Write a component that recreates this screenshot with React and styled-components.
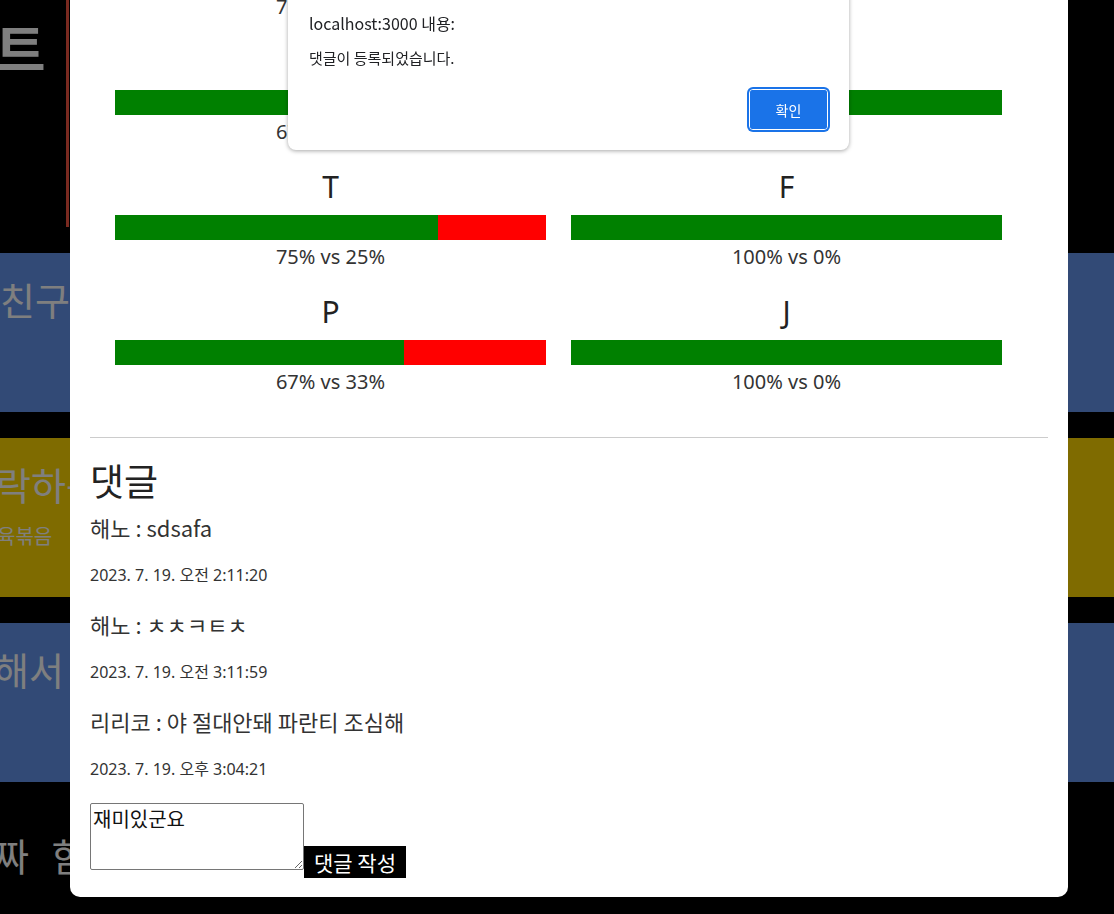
import React from 'react';
import styled, { createGlobalStyle } from 'styled-components';

const stats = [
  { left: { label: 'E', a: 75 }, right: { label: 'I', a: 100 } },
  { left: { label: 'N', a: 67 }, right: { label: 'S', a: 100 } },
  { left: { label: 'T', a: 75 }, right: { label: 'F', a: 100 } },
  { left: { label: 'P', a: 67 }, right: { label: 'J', a: 100 } },
];

const comments = [
  { name: '해노', text: 'sdsafa', date: '2023. 7. 19. 오전 2:11:20' },
  { name: '해노', text: 'ㅊㅊㅋㅌㅊ', date: '2023. 7. 19. 오전 3:11:59' },
  { name: '리리코', text: '야 절대안돼 파란티 조심해', date: '2023. 7. 19. 오후 3:04:21' },
];

const StatBlock = ({ label, a }) => (
  <StatItem>
    <Letter>{label}</Letter>
    <Bar>
      <Fill style={{ width: `${a}%` }} />
    </Bar>
    <Percent>{a}% vs {100 - a}%</Percent>
  </StatItem>
);

const App = () => {
  return (
    <>
      <GlobalStyle />
      <Page>
        <Header>
          <HeaderBlock>
            <Title>트</Title>
          </HeaderBlock>
        </Header>
        <Band $color="cornflowerblue">
          <BandTitle>친구</BandTitle>
        </Band>
        <Band $color="gold">
          <BandTitle $indent={-4}>락하는</BandTitle>
          <BandSub $indent={-3}>육볶음</BandSub>
        </Band>
        <Band $color="cornflowerblue">
          <BandTitle $indent={-6}>해서</BandTitle>
        </Band>
        <BottomText>짜 함</BottomText>
      </Page>

      <Overlay />

      <Modal>
        <StatGrid>
          {stats.map((row, i) => (
            <React.Fragment key={i}>
              <StatBlock {...row.left} />
              <StatBlock {...row.right} />
            </React.Fragment>
          ))}
        </StatGrid>
        <Divider />
        <CommentTitle>댓글</CommentTitle>
        <CommentList>
          {comments.map((c, i) => (
            <CommentItem key={i}>
              <CommentText>{c.name} : {c.text}</CommentText>
              <CommentDate>{c.date}</CommentDate>
            </CommentItem>
          ))}
        </CommentList>
        <CommentForm>
          <CommentInput defaultValue="재미있군요" />
          <SubmitButton>댓글 작성</SubmitButton>
        </CommentForm>
      </Modal>

      <AlertBox>
        <AlertTitle>localhost:3000 내용:</AlertTitle>
        <AlertMessage>댓글이 등록되었습니다.</AlertMessage>
        <AlertActions>
          <AlertButton>확인</AlertButton>
        </AlertActions>
      </AlertBox>
    </>
  );
};

const GlobalStyle = createGlobalStyle`
  html, body {
    margin: 0;
    padding: 0;
    background: #000;
    overflow: hidden;
  }
  body {
    font-family: "Noto Sans", "Noto Sans CJK KR", sans-serif;
  }
`;

const Page = styled.div`
  width: 100%;
  height: 914px;
  background: #000;
  display: flex;
  flex-direction: column;
  overflow: hidden;
  color: #fff;
  font-family: "Noto Sans CJK KR", sans-serif;
`;

const Header = styled.header`
  height: 253px;
  display: flex;
  align-items: flex-start;
  flex-shrink: 0;
`;

const HeaderBlock = styled.div`
  width: 66px;
  height: 227px;
  border-right: 3px solid #f55541;
  overflow: hidden;
`;

const Title = styled.h1`
  margin: 14px 0 0 -5px;
  font-size: 55px;
  font-weight: 700;
  line-height: 64px;
  white-space: nowrap;
`;

const Band = styled.section`
  height: 159px;
  flex-shrink: 0;
  margin-bottom: 26px;
  background: ${(p) => p.$color};
  overflow: hidden;
`;

const BandTitle = styled.div`
  margin-top: 24px;
  font-size: 38px;
  line-height: 44px;
  white-space: nowrap;
  text-indent: ${(p) => p.$indent || 0}px;
`;

const BandSub = styled.div`
  margin-top: 17px;
  font-size: 20px;
  line-height: 26px;
  white-space: nowrap;
  text-indent: ${(p) => p.$indent || 0}px;
`;

const BottomText = styled.div`
  margin-top: 25px;
  font-size: 38px;
  line-height: 44px;
  white-space: nowrap;
  text-indent: -6px;
  word-spacing: 14px;
`;

const Overlay = styled.div`
  position: fixed;
  inset: 0;
  background: rgba(0, 0, 0, 0.5);
`;

const Modal = styled.div`
  position: fixed;
  left: 70px;
  width: 998px;
  bottom: 17px;
  box-sizing: border-box;
  padding: 20px 20px 19px;
  background: #fff;
  border-radius: 10px;
  color: #222;
  font-family: "Noto Sans", "Noto Sans CJK KR", sans-serif;
`;

const StatGrid = styled.div`
  display: grid;
  grid-template-columns: 431px 431px;
  column-gap: 25px;
  row-gap: 25px;
  padding-left: 25px;
`;

const StatItem = styled.div`
  display: flex;
  flex-direction: column;
  align-items: center;
`;

const Letter = styled.div`
  font-size: 30px;
  line-height: 36px;
  margin-bottom: 10px;
  color: #222;
`;

const Bar = styled.div`
  width: 100%;
  height: 25px;
  display: flex;
  background: #ff0000;
`;

const Fill = styled.div`
  height: 100%;
  background: #008000;
`;

const Percent = styled.div`
  margin-top: 5px;
  font-size: 20px;
  line-height: 24px;
  color: #333;
`;

const Divider = styled.hr`
  margin: 43px 0 0;
  border: 0;
  border-top: 1px solid #ccc;
  height: 0;
`;

const CommentTitle = styled.h2`
  margin: 21px 0 0;
  font-family: "Noto Sans CJK KR", sans-serif;
  font-size: 37px;
  line-height: 42px;
  font-weight: 400;
  color: #222;
`;

const CommentList = styled.div`
  display: flex;
  flex-direction: column;
  gap: 23px;
  margin-top: 11px;
`;

const CommentItem = styled.div`
  display: flex;
  flex-direction: column;
  gap: 22px;
`;

const CommentText = styled.div`
  font-family: "Noto Sans CJK KR", sans-serif;
  font-size: 22px;
  line-height: 30px;
  color: #333;
`;

const CommentDate = styled.div`
  font-size: 16px;
  line-height: 22px;
  color: #333;
`;

const CommentForm = styled.div`
  display: flex;
  align-items: flex-start;
  margin-top: 23px;
`;

const CommentInput = styled.textarea`
  width: 214px;
  height: 67px;
  box-sizing: border-box;
  margin: 0;
  padding: 2px;
  border: 1px solid #767676;
  border-radius: 2px;
  font-family: "Noto Sans CJK KR", sans-serif;
  font-size: 20px;
  line-height: 26px;
  color: #111;
  resize: both;
`;

const SubmitButton = styled.button`
  margin-top: 43px;
  height: 32px;
  padding: 0 10px;
  border: 0;
  background: #000;
  color: #fff;
  font-family: "Noto Sans CJK KR", sans-serif;
  font-size: 21px;
  line-height: 32px;
  cursor: pointer;
`;

const AlertBox = styled.div`
  position: fixed;
  left: 288px;
  top: -12px;
  width: 561px;
  box-sizing: border-box;
  padding: 24px 20px 20px;
  background: #fff;
  border-radius: 8px;
  box-shadow: 0 1px 4px rgba(0, 0, 0, 0.35);
  font-family: "Noto Sans CJK KR", sans-serif;
  color: #202124;
`;

const AlertTitle = styled.div`
  font-size: 16px;
  line-height: 22px;
  margin-left: 1px;
`;

const AlertMessage = styled.div`
  margin-top: 14px;
  font-size: 15px;
  line-height: 20px;
  margin-left: 1px;
`;

const AlertActions = styled.div`
  display: flex;
  justify-content: flex-end;
  margin-top: 21px;
`;

const AlertButton = styled.button`
  width: 79px;
  height: 41px;
  box-sizing: border-box;
  border: 1px solid #fff;
  border-radius: 4px;
  outline: 2px solid #1a73e8;
  outline-offset: -3px;
  box-shadow: 0 0 0 2px #1a73e8;
  background: #1a73e8;
  color: #fff;
  font-family: "Noto Sans CJK KR", sans-serif;
  font-size: 14px;
  margin-right: 1px;
  cursor: pointer;
`;

export default App;
